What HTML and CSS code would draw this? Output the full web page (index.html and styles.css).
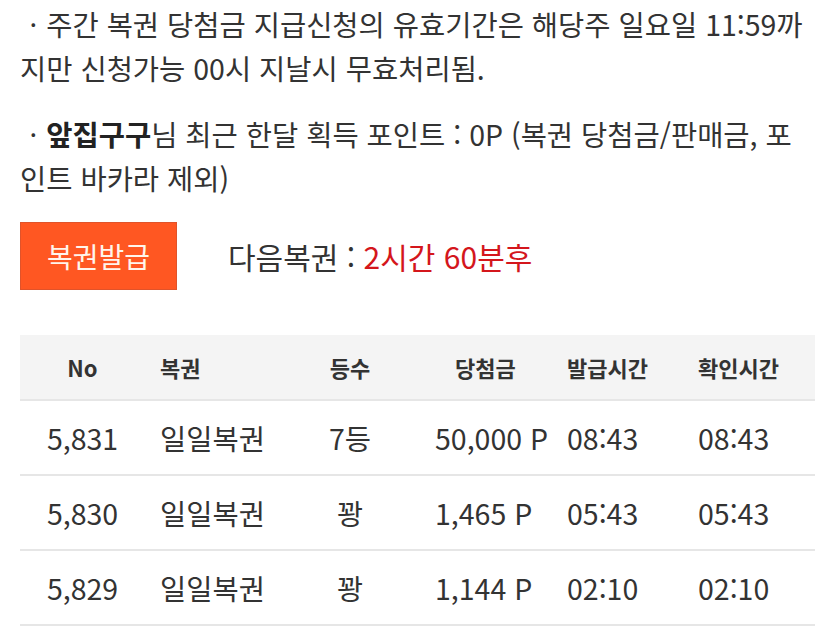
FILE: index.html
```html
<!DOCTYPE html>
<html lang="ko">
<head>
<meta charset="utf-8">
<link rel="stylesheet" href="styles.css">
</head>
<body>
<div class="page">
  <p class="note">ㆍ주간 복권 당첨금 지급신청의 유효기간은 해당주 일요일 11:59까지만 신청가능 00시 지날시 무효처리됨.</p>
  <p class="note">ㆍ<b>앞집구구</b>님 최근 한달 획득 포인트 : 0P (복권 당첨금/판매금, 포인트 바카라 제외)</p>
  <div class="action">
    <button class="issue">복권발급</button>
    <span class="next">다음복권 : <span class="red">2시간 60분후</span></span>
  </div>
  <div class="table">
    <div class="row head">
      <div class="c1">No</div>
      <div class="c2">복권</div>
      <div class="c3">등수</div>
      <div class="c4 h4">당첨금</div>
      <div class="c5">발급시간</div>
      <div class="c6">확인시간</div>
    </div>
    <div class="row">
      <div class="c1">5,831</div>
      <div class="c2">일일복권</div>
      <div class="c3">7등</div>
      <div class="c4">50,000 P</div>
      <div class="c5">08:43</div>
      <div class="c6">08:43</div>
    </div>
    <div class="row">
      <div class="c1">5,830</div>
      <div class="c2">일일복권</div>
      <div class="c3">꽝</div>
      <div class="c4">1,465 P</div>
      <div class="c5">05:43</div>
      <div class="c6">05:43</div>
    </div>
    <div class="row">
      <div class="c1">5,829</div>
      <div class="c2">일일복권</div>
      <div class="c3">꽝</div>
      <div class="c4">1,144 P</div>
      <div class="c5">02:10</div>
      <div class="c6">02:10</div>
    </div>
  </div>
</div>
</body>
</html>
```
FILE: styles.css
```css
html, body {
  margin: 0;
  padding: 0;
  background: #ffffff;
}
body {
  font-family: "Noto Sans CJK KR", "Noto Sans", sans-serif;
  color: #333333;
}
.page {
  padding: 2px 20px 0 20px;
}
.note {
  margin: 0 0 22px 0;
  font-size: 28.5px;
  line-height: 44px;
  color: #333333;
}
.note b {
  font-weight: 700;
  color: #222222;
}
.action {
  display: flex;
  align-items: center;
  gap: 51px;
}
.issue {
  width: 157px;
  height: 68px;
  background: #ff5722;
  border: 1px solid #e0532a;
  color: #fff5ec;
  font-family: inherit;
  font-size: 28px;
  padding: 0;
}
.next {
  font-size: 30px;
  color: #333333;
}
.red {
  color: #d4161c;
}
.table {
  margin-top: 45px;
}
.row {
  display: grid;
  grid-template-columns: 125px 155px 100px 155px 130px 130px;
  align-items: center;
  height: 73px;
  border-bottom: 2px solid #e6e6e6;
  font-size: 28.5px;
  color: #333333;
}
.row.head {
  height: 64px;
  background: #f4f4f4;
  font-size: 22px;
  font-weight: 700;
}
.c1 { text-align: center; }
.c2 { padding-left: 15px; }
.c3 { text-align: center; }
.c4 { padding-left: 35px; }
.h4 { padding-left: 55px; }
.c5 { padding-left: 12px; }
.c6 { padding-left: 13px; }
```
